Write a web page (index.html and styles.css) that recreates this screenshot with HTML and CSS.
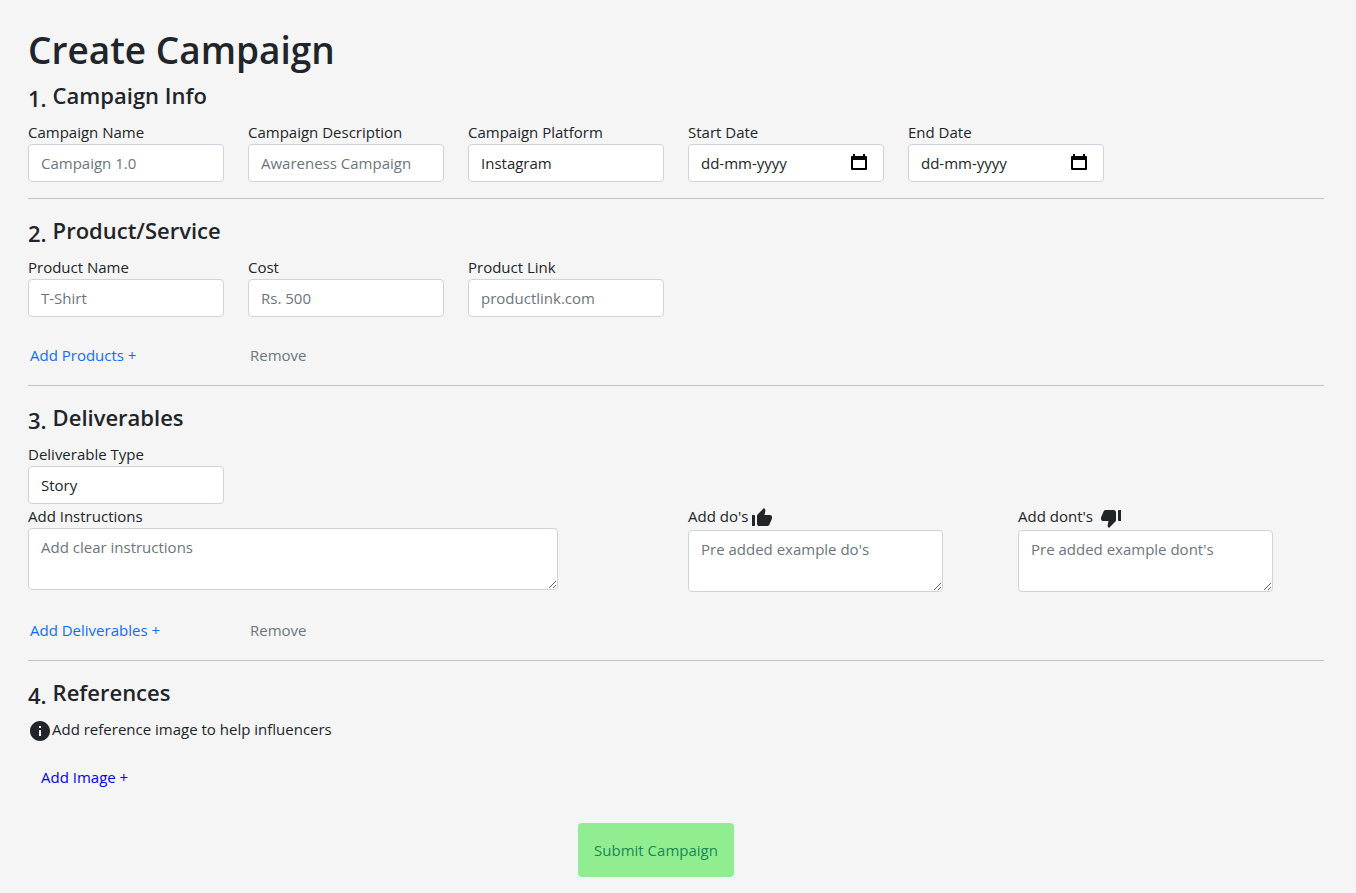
FILE: index.html
```html
<!DOCTYPE html>
<html lang="en">
<head>
<meta charset="utf-8">
<title>Create Campaign</title>
<link rel="stylesheet" href="styles.css">
</head>
<body>
<form class="campaign">
  <h1 class="page-title">Create Campaign</h1>

  <section class="section">
    <h2 class="section-title"><span class="number">1.</span>Campaign Info</h2>
    <div class="grid">
      <div class="field"><label for="name">Campaign Name</label><input class="control" id="name" type="text" placeholder="Campaign 1.0"></div>
      <div class="field"><label for="description">Campaign Description</label><input class="control" id="description" type="text" placeholder="Awareness Campaign"></div>
      <div class="field"><label for="platform">Campaign Platform</label><select class="control" id="platform"><option>Instagram</option></select></div>
      <div class="field"><label for="start">Start Date</label>
        <div class="control date"><input class="date-input" id="start" type="text" placeholder="dd-mm-yyyy"><button class="picker" type="button" aria-label="Pick start date"><svg viewBox="0 0 16 18" width="16" height="18"><path d="M2 1h2v2h8V1h2v2h1a1 1 0 0 1 1 1v12a1 1 0 0 1-1 1H1a1 1 0 0 1-1-1V4a1 1 0 0 1 1-1h1zM2 7v8h12V7z" fill-rule="evenodd"/></svg></button></div></div>
      <div class="field"><label for="end">End Date</label>
        <div class="control date"><input class="date-input" id="end" type="text" placeholder="dd-mm-yyyy"><button class="picker" type="button" aria-label="Pick end date"><svg viewBox="0 0 16 18" width="16" height="18"><path d="M2 1h2v2h8V1h2v2h1a1 1 0 0 1 1 1v12a1 1 0 0 1-1 1H1a1 1 0 0 1-1-1V4a1 1 0 0 1 1-1h1zM2 7v8h12V7z" fill-rule="evenodd"/></svg></button></div></div>
    </div>
  </section>

  <section class="section">
    <h2 class="section-title"><span class="number">2.</span>Product/Service</h2>
    <div class="grid">
      <div class="field"><label for="product">Product Name</label><input class="control" id="product" type="text" placeholder="T-Shirt"></div>
      <div class="field"><label for="cost">Cost</label><input class="control" id="cost" type="text" placeholder="Rs. 500"></div>
      <div class="field"><label for="link">Product Link</label><input class="control" id="link" type="text" placeholder="productlink.com"></div>
    </div>
    <div class="grid actions">
      <button class="action add" type="button">Add Products +</button>
      <button class="action" type="button">Remove</button>
    </div>
  </section>

  <section class="section">
    <h2 class="section-title"><span class="number">3.</span>Deliverables</h2>
    <div class="grid">
      <div class="field"><label for="type">Deliverable Type</label><select class="control" id="type"><option>Story</option></select></div>
    </div>
    <div class="grid">
      <div class="field half"><label for="instructions">Add Instructions</label><textarea class="control area" id="instructions" placeholder="Add clear instructions"></textarea></div>
      <div class="field quarter"><label class="icon-label" for="dos">Add do's<svg class="icon" viewBox="0 0 24 24"><path d="M2 20h2c.55 0 1-.45 1-1v-9c0-.55-.45-1-1-1H2v11zm19.83-7.12c.11-.25.17-.52.17-.8V11c0-1.100-.9-2-2-2h-5.500l.92-4.650c.05-.22.02-.46-.08-.66-.23-.45-.52-.86-.88-1.220L14 2 7.590 8.410C7.210 8.790 7 9.300 7 9.830v7.840C7 18.950 8.050 20 9.340 20h8.110c.7 0 1.360-.37 1.720-.97l2.660-6.150z"/></svg></label><textarea class="control area" id="dos" placeholder="Pre added example do's"></textarea></div>
      <div class="field quarter"><label class="icon-label" for="donts"><span>Add dont's&nbsp;</span><svg class="icon" viewBox="0 0 24 24"><path d="M22 4h-2c-.55 0-1 .45-1 1v9c0 .55.45 1 1 1h2V4zM2.170 11.120c-.11.25-.17.52-.17.8V13c0 1.100.9 2 2 2h5.500l-.92 4.650c-.05.22-.02.46.08.66.23.45.52.86.88 1.220L10 22l6.410-6.410c.38-.38.59-.89.59-1.420V6.340C17 5.050 15.950 4 14.660 4h-8.100c-.71 0-1.360.37-1.720.97l-2.670 6.150z"/></svg></label><textarea class="control area" id="donts" placeholder="Pre added example dont's"></textarea></div>
    </div>
    <div class="grid actions">
      <button class="action add" type="button">Add Deliverables +</button>
      <button class="action" type="button">Remove</button>
    </div>
  </section>

  <section class="section">
    <h2 class="section-title"><span class="number">4.</span>References</h2>
    <p class="hint"><svg class="icon" viewBox="0 0 24 24"><path d="M12 2C6.480 2 2 6.480 2 12s4.480 10 10 10 10-4.480 10-10S17.520 2 12 2zm1 15h-2v-6h2v6zm0-8h-2V7h2v2z"/></svg>Add reference image to help influencers</p>
    <button class="image-button" type="button">Add Image +</button>
  </section>

  <div class="grid">
    <button class="submit" type="submit">Submit Campaign</button>
  </div>
</form>
</body>
</html>
```

FILE: styles.css
```css
* { box-sizing: border-box; }
body {
  margin: 0;
  background: #f5f5f5;
  color: #212529;
  font-family: "Segoe UI", "Open Sans", "Noto Sans", sans-serif;
  font-size: 15px;
  line-height: 24px;
}
button, input, select, textarea { font: inherit; color: inherit; }
button { border: 0; background: none; cursor: pointer; }
.campaign { padding: 26px 32px 16px 28px; }
.page-title { margin: 0 0 6px; font-size: 37px; line-height: 48px; font-weight: 600; }
.section + .section { margin-top: 16px; padding-top: 16px; border-top: 1px solid #c2c2c2; }
.section-title {
  display: flex;
  gap: 6px;
  margin: 0 0 10px;
  font-size: 22px;
  line-height: 30px;
  font-weight: 600;
}
.number { padding-top: 4px; line-height: 28px; height: 30px; }
.grid {
  display: grid;
  grid-template-columns: repeat(12, minmax(0, 1fr));
  column-gap: 24px;
}
.field { grid-column: span 2; }
.half { grid-column: span 6; }
.quarter { grid-column: span 3; }
.field label { display: block; white-space: nowrap; }
.field .icon-label { display: flex; gap: 2px; height: 26px; }
.icon { width: 24px; height: 24px; flex: none; fill: #212529; }
.icon-label .icon { margin-top: 2px; }
.control {
  display: block;
  width: 100%;
  height: 38px;
  padding: 6px 12px;
  border: 1px solid #ced4da;
  border-radius: 4px;
  background: #fff;
  appearance: none;
}
.control::placeholder { color: #6c757d; opacity: 1; }
.area { width: 83.3333%; height: 62px; resize: both; }
.date { display: flex; align-items: center; justify-content: space-between; }
.date-input { width: 100px; padding: 0; border: 0; background: none; }
.date-input::placeholder { color: #212529; opacity: 1; }
.picker { display: flex; margin-right: 4px; padding: 0 0 2px; }
.actions { padding: 26px 0 2px; }
.action { grid-column: span 2; padding: 0 2px; text-align: left; color: #6c757d; white-space: nowrap; }
.add { color: #0d6efd; }
.hint { display: flex; margin: 0; }
.hint .icon { margin-top: 2px; }
.image-button { margin: 16px 0 28px; padding: 6px 13px; color: #00f; }
.submit {
  grid-column: 6 / span 3;
  justify-self: start;
  min-width: 156px;
  padding: 15px 14px;
  border-radius: 4px;
  background: #90ee90;
  color: #198754;
}
```
